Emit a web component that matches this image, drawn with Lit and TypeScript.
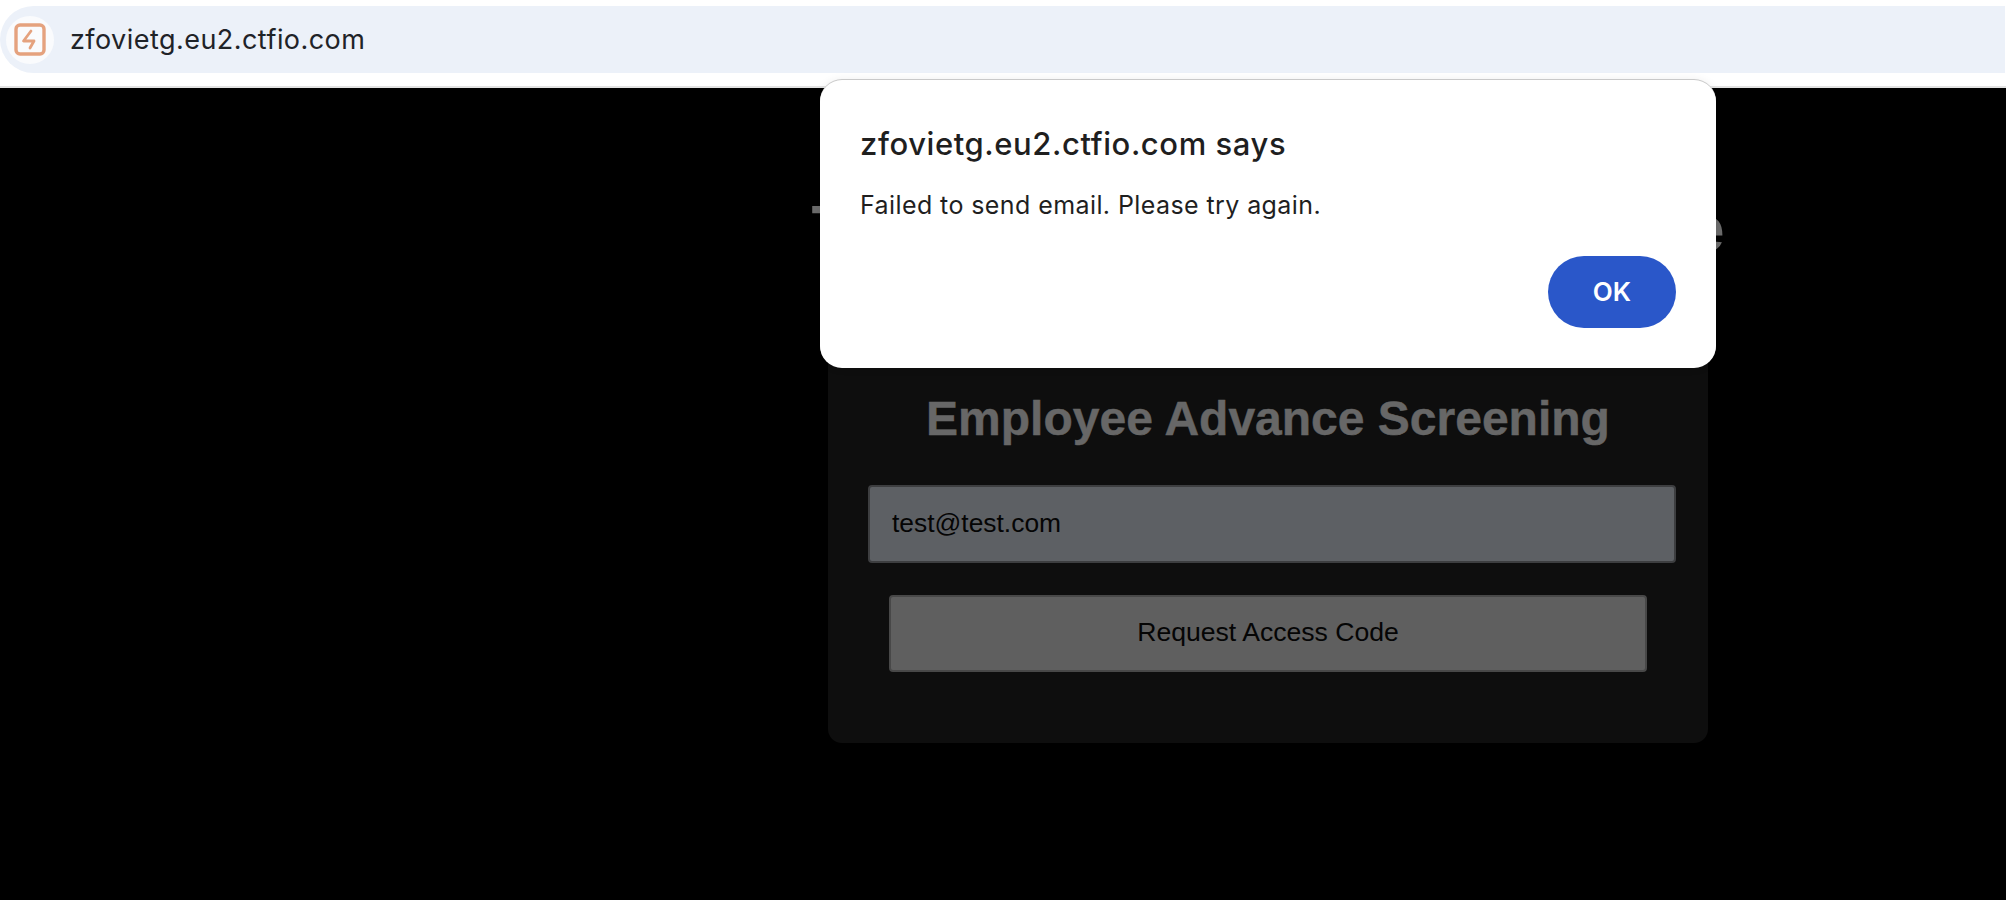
import { LitElement, html, css } from "lit";
import { customElement } from "lit/decorators.js";

@customElement("app-root")
export class AppRoot extends LitElement {
  static styles = css`
    :host { display: block; width: 2006px; height: 900px; overflow: hidden; position: relative; background: #000; }
    .chrome { height: 88px; box-sizing: border-box; background: #fff; padding: 6px 1px 0 0; border-bottom: 2px solid #e3e3e3; }
    .bar { height: 67px; background: #ecf1f9; border-radius: 34px 0 0 34px; display: flex; align-items: center; padding-left: 6px; gap: 16px; }
    .fav { width: 48px; height: 48px; border-radius: 50%; background: #fafbfd; display: flex; align-items: center; justify-content: center; }
    .fav svg { display: block; }
    .url { font: 400 27px/32px Inter, sans-serif; letter-spacing: .45px; color: #1f2328; }
    main { height: 812px; display: flex; flex-direction: column; align-items: center; font-family: "Liberation Sans", Arial, sans-serif; padding-left: 530px; box-sizing: border-box; }
    .behind { margin-top: 105px; height: 72px; width: 913px; font: 700 64px/72px "Liberation Sans", sans-serif; color: #6b6b6b; display: flex; justify-content: space-between; }
    .card { margin-top: 3px; width: 880px; height: 475px; box-sizing: border-box; background: #0e0e0e; border-radius: 14px; padding: 123px 40px 0; display: flex; flex-direction: column; align-items: stretch; }
    h2 { margin: 0; font: 700 48px/56px "Liberation Sans", sans-serif; color: #676767; -webkit-text-stroke: .5px #676767; text-align: center; }
    .input { margin: 38px -8px 0 0; height: 78px; box-sizing: border-box; background: #5d6064; border: 2px solid #3d3e40; border-radius: 4px; padding: 0 22px; font-size: 26.4px; line-height: 72px; color: #050505; }
    .btn { margin: 32px 21px 0; height: 77px; box-sizing: border-box; background: #5f5f5f; border: 2px solid #484848; border-radius: 4px; font-size: 26.6px; line-height: 70px; color: #050505; text-align: center; }
    .dialog { position: absolute; left: 820px; top: 80px; width: 896px; height: 288px; box-sizing: border-box; background: #fff; border-radius: 22px; padding: 46px 40px 40px; box-shadow: 0 -1px 0 #c9c9c9, 0 0 10px rgba(0,0,0,.08); display: flex; flex-direction: column; font-family: Inter, sans-serif; color: #1f1f1f; }
    .d-title { font-size: 31px; line-height: 36px; font-weight: 500; letter-spacing: .58px; }
    .d-msg { margin-top: 28px; font-size: 25px; line-height: 30px; font-weight: 400; letter-spacing: .41px; }
    .actions { margin-top: auto; display: flex; justify-content: flex-end; }
    .ok { width: 128px; height: 72px; border-radius: 36px; background: #2a57c9; color: #fff; font-size: 26px; font-weight: 600; display: flex; align-items: center; justify-content: center; padding-bottom: 2px; box-sizing: border-box; }
  `;

  render() {
    return html`
      <div class="chrome">
        <div class="bar">
          <div class="fav">
            <svg width="32" height="33" viewBox="0 0 32 33" fill="none" stroke="#e5a27e" stroke-width="3.4" stroke-linejoin="round" stroke-linecap="round">
              <rect x="2" y="2" width="28" height="29" rx="4"></rect>
              <path d="M17 8 L9.5 18 H20 L16 25" stroke-width="2.8"></path>
            </svg>
          </div>
          <div class="url">zfovietg.eu2.ctfio.com</div>
        </div>
      </div>
      <main>
        <div class="behind"><span>T</span><span>e</span></div>
        <section class="card">
          <h2>Employee Advance Screening</h2>
          <div class="input">test@test.com</div>
          <div class="btn">Request Access Code</div>
        </section>
      </main>
      <div class="dialog">
        <div class="d-title">zfovietg.eu2.ctfio.com says</div>
        <div class="d-msg">Failed to send email. Please try again.</div>
        <div class="actions"><div class="ok">OK</div></div>
      </div>
    `;
  }
}
